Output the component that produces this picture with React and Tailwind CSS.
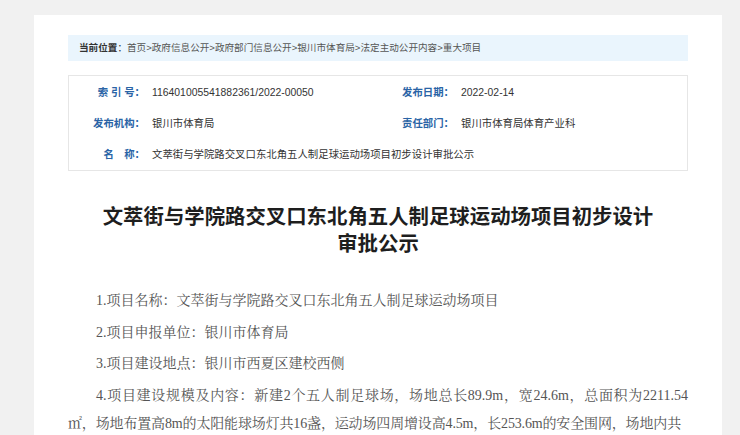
export default function App() {
  const sans = { fontFamily: '"Liberation Sans", "Noto Sans CJK SC", sans-serif' };
  const serif = { fontFamily: '"Liberation Serif", "Noto Serif CJK SC", "Noto Sans CJK SC", serif' };
  const Row = ({ label, value, className = "" }) => (
    <div className={"flex items-center h-[31px] " + className}>
      <div className="w-[76px] shrink-0 text-right font-bold text-[#2a64a6]">{label}</div>
      <div className="pl-[7px] text-[#333] whitespace-nowrap">{value}</div>
    </div>
  );
  return (
    <div className="min-h-screen bg-[#f1f1f1] pt-[15px] pl-[34px] pr-[18px] overflow-hidden" style={sans}>
      <div className="bg-white px-[34px] pt-[20px] pb-[40px] h-[430px]">
        <div className="h-[26px] bg-[#eaf5fd] flex items-center pl-[11px] text-[9.6px] text-[#555] whitespace-nowrap">
          <span className="font-bold text-[#333]">当前位置</span>
          <span className="text-[#333]">：</span>
          <span>首页&gt;政府信息公开&gt;政府部门信息公开&gt;银川市体育局&gt;法定主动公开内容&gt;重大项目</span>
        </div>
        <div className="mt-[14px] h-[96px] border border-[#e6e6e6] py-[1px] text-[10.4px]">
          <div className="grid grid-cols-2">
            <Row label="索 引 号：" value="116401005541882361/2022-00050" />
            <Row label="发布日期：" value="2022-02-14" />
            <Row label="发布机构：" value="银川市体育局" />
            <Row label="责任部门：" value="银川市体育局体育产业科" />
            <Row className="col-span-2" label="名　称：" value="文萃街与学院路交叉口东北角五人制足球运动场项目初步设计审批公示" />
          </div>
        </div>
        <h1 className="mt-[31px] max-w-[562px] mx-auto text-center text-[20.4px] leading-[26.5px] font-bold text-[#1e1e1e]" style={{ fontFamily: '"Noto Sans CJK SC", sans-serif' }}>
          文萃街与学院路交叉口东北角五人制足球运动场项目初步设计审批公示
        </h1>
        <div className="mt-[32px] text-[14px] leading-[28px] text-[#555] text-justify" style={serif}>
          <p className="indent-[28px] mb-[3.7px]">1.项目名称：文萃街与学院路交叉口东北角五人制足球运动场项目</p>
          <p className="indent-[28px] mb-[3.7px]">2.项目申报单位：银川市体育局</p>
          <p className="indent-[28px] mb-[3.7px]">3.项目建设地点：银川市西夏区建校西侧</p>
          <p className="indent-[28px] mb-[3.7px]">4.项目建设规模及内容：新建2个五人制足球场，场地总长89.9m，宽24.6m，总面积为2211.54<span className="tracking-[-0.15px]">㎡，场地布置高8m的太阳能球场灯共16盏，运动场四周增设高4.5m，长253.6m的安全围网，场地内共</span></p>
        </div>
      </div>
    </div>
  );
}
